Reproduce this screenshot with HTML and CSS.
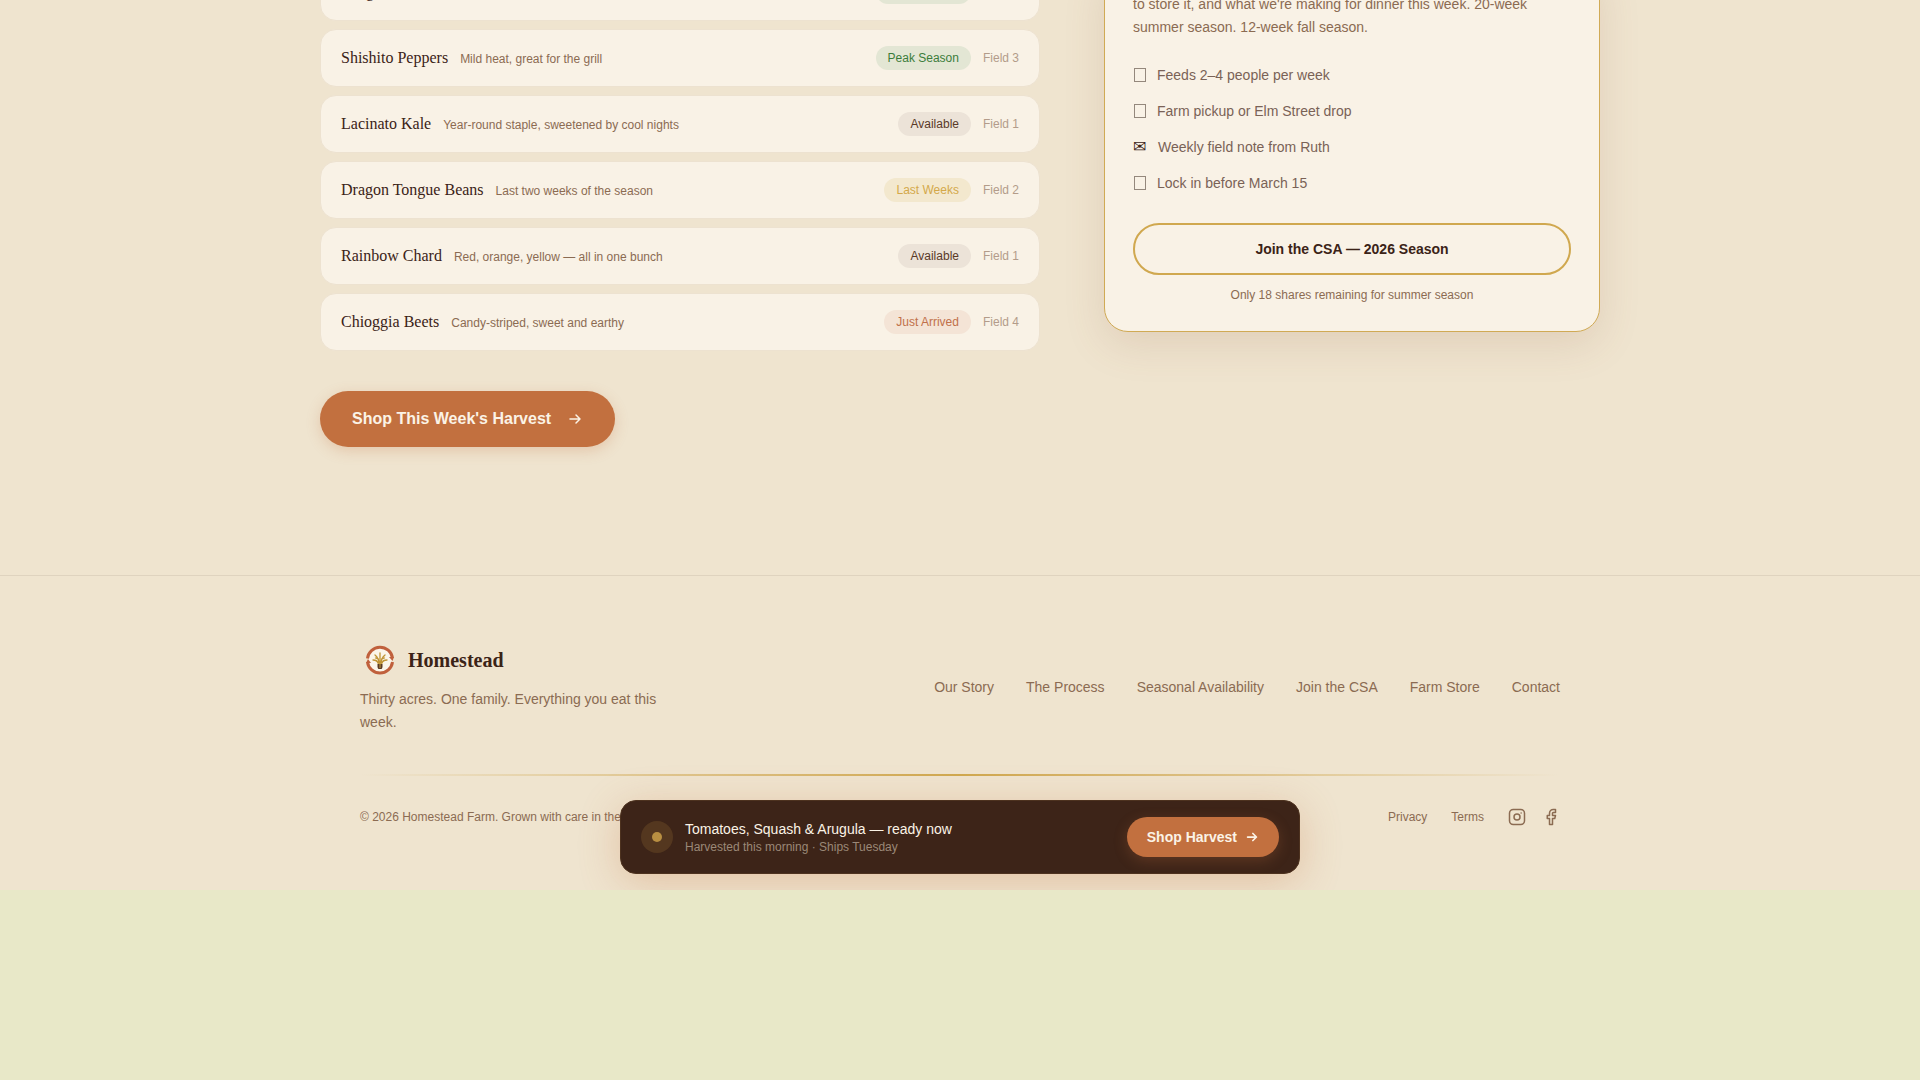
FILE: index.html
```html
<!DOCTYPE html>
<html lang="en">
<head>
<meta charset="utf-8">
<meta name="viewport" content="width=device-width, initial-scale=1">
<title>Homestead Farm</title>
<link rel="stylesheet" href="styles.css">
</head>
<body>
<div class="page">
  <main class="season">
    <section class="harvest">
      <ul class="crops">
        <li class="crop"><span class="crop-name">Arugula</span><span class="crop-side"><span class="badge peak">Peak Season</span><span class="field">Field 2</span></span></li>
        <li class="crop"><span class="crop-name">Shishito Peppers</span><span class="crop-note">Mild heat, great for the grill</span><span class="crop-side"><span class="badge peak">Peak Season</span><span class="field">Field 3</span></span></li>
        <li class="crop"><span class="crop-name">Lacinato Kale</span><span class="crop-note">Year-round staple, sweetened by cool nights</span><span class="crop-side"><span class="badge available">Available</span><span class="field">Field 1</span></span></li>
        <li class="crop"><span class="crop-name">Dragon Tongue Beans</span><span class="crop-note">Last two weeks of the season</span><span class="crop-side"><span class="badge last">Last Weeks</span><span class="field">Field 2</span></span></li>
        <li class="crop"><span class="crop-name">Rainbow Chard</span><span class="crop-note">Red, orange, yellow — all in one bunch</span><span class="crop-side"><span class="badge available">Available</span><span class="field">Field 1</span></span></li>
        <li class="crop"><span class="crop-name">Chioggia Beets</span><span class="crop-note">Candy-striped, sweet and earthy</span><span class="crop-side"><span class="badge arrived">Just Arrived</span><span class="field">Field 4</span></span></li>
      </ul>
      <button class="button button-large" type="button">Shop This Week's Harvest
        <svg width="16" height="16" viewBox="0 0 16 16" fill="none" stroke="currentColor" stroke-width="1.5" stroke-linecap="round" stroke-linejoin="round" aria-hidden="true"><path d="M3 8h10M9 4l4 4-4 4"/></svg>
      </button>
    </section>
    <aside class="csa">
      <p class="csa-text">to store it, and what we're making for dinner this week. 20-week summer season. 12-week fall season.</p>
      <ul class="perks">
        <li><span class="perk-box"></span>Feeds 2–4 people per week</li>
        <li><span class="perk-box"></span>Farm pickup or Elm Street drop</li>
        <li><span class="perk-icon">✉</span>Weekly field note from Ruth</li>
        <li><span class="perk-box"></span>Lock in before March 15</li>
      </ul>
      <button class="join" type="button">Join the CSA — 2026 Season</button>
      <p class="remaining">Only 18 shares remaining for summer season</p>
    </aside>
  </main>

  <footer class="footer">
    <div class="footer-inner">
      <div class="footer-top">
        <div class="about">
          <a class="brand" href="#">
            <svg width="40" height="40" viewBox="0 0 40 40" fill="none" aria-hidden="true">
              <circle cx="20" cy="20" r="12" fill="#fbf5e9"/>
              <path d="M7.500 18.500A12.600 12.600 0 0 1 32.500 18" stroke="#c0603c" stroke-width="3"/>
              <path d="M32.500 22A12.600 12.600 0 0 1 7.500 22" stroke="#c0603c" stroke-width="3"/>
              <path d="M29 17h5l-1.500 4zM11 23H6l2-4z" fill="#c0603c"/>
              <path d="M20 23V13M19 24c0-4-1.500-7-4-9M21 24c0-4 1.500-7 4-9M18 23c-.5-2-2-3-5-3M22 23c.5-2 2-3 5-3M18.500 19l-3-1M21.500 19l3-1" stroke="#c09435" stroke-width="1.300" stroke-linecap="round"/>
              <path d="M17.500 24h5v3q-.5 2-1 2h-3q-.5 0-1-2z" fill="#5a3a22"/>
              <path d="M20 24v4" stroke="#c79d3f"/>
            </svg>
            Homestead
          </a>
          <p class="tagline">Thirty acres. One family. Everything you eat this week.</p>
        </div>
        <nav class="links">
          <a href="#">Our Story</a>
          <a href="#">The Process</a>
          <a href="#">Seasonal Availability</a>
          <a href="#">Join the CSA</a>
          <a href="#">Farm Store</a>
          <a href="#">Contact</a>
        </nav>
      </div>
      <div class="divider"></div>
      <div class="footer-bottom">
        <p>© 2026 Homestead Farm. Grown with care in the valley.</p>
        <div class="legal">
          <a href="#">Privacy</a>
          <a href="#">Terms</a>
          <div class="social">
            <a href="#" aria-label="Instagram"><svg width="18" height="18" viewBox="0 0 24 24" fill="none" stroke="currentColor" stroke-width="2" stroke-linecap="round" stroke-linejoin="round"><rect x="2" y="2" width="20" height="20" rx="5"/><circle cx="12" cy="12" r="4"/><path d="M17.500 6.500h.01"/></svg></a>
            <a href="#" aria-label="Facebook"><svg width="18" height="18" viewBox="0 0 24 24" fill="none" stroke="currentColor" stroke-width="2" stroke-linecap="round" stroke-linejoin="round"><path d="M18 2h-3a5 5 0 0 0-5 5v3H7v4h3v8h4v-8h3l1-4h-4V7a1 1 0 0 1 1-1h3z"/></svg></a>
          </div>
        </div>
      </div>
    </div>
  </footer>

  <div class="notice">
    <span class="pulse"></span>
    <div class="notice-text">
      <p class="notice-title">Tomatoes, Squash &amp; Arugula — ready now</p>
      <p class="notice-sub">Harvested this morning · Ships Tuesday</p>
    </div>
    <button class="button button-small" type="button">Shop Harvest
      <svg width="14" height="14" viewBox="0 0 16 16" fill="none" stroke="currentColor" stroke-width="2" stroke-linecap="round" stroke-linejoin="round" aria-hidden="true"><path d="M3 8h10M9 4l4 4-4 4"/></svg>
    </button>
  </div>
</div>
</body>
</html>
```
FILE: styles.css
```css
* { box-sizing: border-box; }
body {
  margin: 0;
  background: #e8e8c8;
  color: #3b2317;
  font-family: "Liberation Sans", Arial, sans-serif;
  font-size: 14px;
}
p, ul { margin: 0; padding: 0; }
ul { list-style: none; }
a { color: inherit; text-decoration: none; }
svg { display: block; flex: none; }
button { font-family: inherit; cursor: pointer; }

.page {
  position: relative;
  overflow: hidden;
  background: #efe4cf;
}

.season {
  display: grid;
  grid-template-columns: repeat(12, minmax(0, 1fr));
  column-gap: 64px;
  align-items: start;
  max-width: 1280px;
  margin: 0 auto;
  padding-bottom: 128px;
}
.harvest { grid-column: span 7; margin-top: -37px; }
.crops { display: grid; gap: 8px; margin-bottom: 40px; }
.crop {
  display: flex;
  align-items: center;
  gap: 12px;
  padding: 16px 20px;
  border: 1px solid #ede2d0;
  border-radius: 16px;
  background: #f9f2e6;
  font-size: 12px;
  line-height: 24px;
}
.crop-name { font-family: "Liberation Serif", serif; font-size: 16px; }
.crop-note { color: #8b6b52; padding-top: 2px; line-height: 22px; }
.crop-side { display: flex; gap: 12px; margin-left: auto; }
.badge { padding: 0 12px; border-radius: 12px; }
.peak { background: #e3e6d4; color: #3b7d3b; }
.available { background: #ece3d8; color: #5a3a28; }
.last { background: #f3e8ce; color: #d4a84a; }
.arrived { background: #f4e4d6; color: #c1704a; }
.field { color: #b39c8a; }

.button {
  display: inline-flex;
  align-items: center;
  border: 0;
  border-radius: 28px;
  background: #c2703f;
  color: #fbf3e6;
  font-weight: 700;
}
.button-large {
  gap: 16px;
  padding: 16px 32px;
  font-size: 16px;
  line-height: 24px;
  box-shadow: 0 4px 14px rgba(194, 112, 63, 0.25);
}
.button-small {
  gap: 8px;
  padding: 10px 20px;
  font-size: 14px;
  line-height: 20px;
  box-shadow: 0 4px 14px rgba(194, 112, 63, 0.25);
}

.csa {
  grid-column: span 5;
  margin-top: -36px;
  padding: 28px;
  border: 1px solid #d0aa55;
  border-radius: 24px;
  background: #f9f2e6;
  box-shadow: 0 12px 40px rgba(139, 90, 60, 0.15);
}
.csa-text { color: #8b6b52; line-height: 23px; margin-bottom: 24px; }
.perks { display: grid; gap: 12px; margin-bottom: 28px; }
.perks li { display: flex; align-items: center; gap: 12px; color: #7a6256; line-height: 24px; }
.perk-icon { color: #3b2317; font-size: 16px; }
.perk-box { width: 12px; height: 14px; padding: 0 1px; }
.perk-box::before {
  content: "";
  display: block;
  width: 10px;
  height: 12px;
  border: 1px solid #94887c;
}
.join {
  display: block;
  width: 100%;
  padding: 14px;
  border: 2px solid #d0a84f;
  border-radius: 26px;
  background: transparent;
  color: #3b2317;
  font-size: 14px;
  font-weight: 700;
  line-height: 20px;
}
.remaining { margin-top: 12px; color: #8b6b52; font-size: 12px; line-height: 16px; text-align: center; }

.footer { border-top: 1px solid #dfd3bf; padding: 64px 40px; color: #8b6b52; }
.footer-inner { max-width: 1200px; margin: 0 auto; }
.footer-top { display: flex; align-items: center; justify-content: space-between; }
.about { max-width: 320px; }
.brand {
  display: flex;
  align-items: center;
  gap: 8px;
  margin-bottom: 8px;
  color: #3b2317;
  font-family: "Liberation Serif", serif;
  font-size: 20px;
  font-weight: 700;
}
.tagline { line-height: 23px; }
.links { display: flex; gap: 32px; line-height: 20px; }
.divider {
  height: 2px;
  margin: 40px 0 32px;
  background: linear-gradient(90deg, transparent, #d0a84f, transparent);
}
.footer-bottom { display: flex; align-items: center; justify-content: space-between; font-size: 12px; line-height: 16px; }
.legal { display: flex; align-items: center; gap: 24px; }
.social { display: flex; gap: 16px; }

.notice {
  position: absolute;
  bottom: 16px;
  left: 50%;
  transform: translateX(-50%);
  display: flex;
  align-items: center;
  gap: 12px;
  width: 680px;
  max-width: 100%;
  padding: 16px 20px;
  border: 1px solid #4d321f;
  border-radius: 16px;
  background: #3d2418;
  box-shadow: 0 8px 40px rgba(194, 112, 63, 0.3);
}
.pulse {
  display: grid;
  place-items: center;
  width: 32px;
  height: 32px;
  border-radius: 50%;
  background: #54371f;
}
.pulse::before { content: ""; width: 10px; height: 10px; border-radius: 50%; background: #b98f42; }
.notice-text { flex: 1; }
.notice-title { color: #fbf3e6; line-height: 20px; }
.notice-sub { color: #9b8877; font-size: 12px; line-height: 16px; }
```
